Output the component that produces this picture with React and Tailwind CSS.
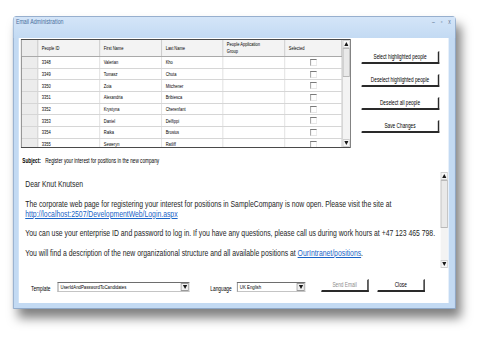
import React from "react"

const people = [
  ["3348", "Valerian", "Kho"],
  ["3349", "Tomasz", "Chuta"],
  ["3350", "Zoia", "Mitchener"],
  ["3351", "Alexandria", "Bribiesca"],
  ["3352", "Krystyna", "Cherenfant"],
  ["3353", "Daniel", "Delfippi"],
  ["3354", "Raika", "Brosius"],
  ["3355", "Seweryn", "Ratliff"],
]

function Tri({ down }) {
  return (
    <svg width="6" height="4" viewBox="0 0 6 4">
      <path d={down ? "M0 0h6L3 4z" : "M0 4h6L3 0z"} fill="#1a1a1a" />
    </svg>
  )
}

function ScrollBar({ thumbTop, thumbHeight }) {
  return (
    <div className="flex h-full w-full flex-col bg-[#f3f3f3]">
      <div className="flex h-[8px] shrink-0 items-center justify-center border border-[#cfcfcf] bg-[#f6f6f6]">
        <Tri />
      </div>
      <div className="flex-1">
        <div style={{ marginTop: thumbTop, height: thumbHeight }} className="border border-[#b9b9b9] bg-[#e9e9e9]" />
      </div>
      <div className="flex h-[8px] shrink-0 items-center justify-center border border-[#cfcfcf] bg-[#f6f6f6]">
        <Tri down />
      </div>
    </div>
  )
}

function Btn({ children, className, disabled }) {
  return (
    <div className={`flex items-center justify-center border-t border-l border-t-white border-l-white border-r-2 border-b-2 border-r-[#2a2a2a] border-b-[#2a2a2a] bg-white text-[6.6px] ${disabled ? "text-[#8c8c8c]" : "text-black"} ${className}`}>
      {children}
    </div>
  )
}

function Select({ value, className }) {
  return (
    <div className={`flex h-[10px] border border-t-[#6e6e6e] border-l-[#6e6e6e] border-r-[#c4c4c4] border-b-[#c4c4c4] bg-white ${className}`}>
      <span className="flex-1 pl-[3px] text-[6px] leading-[8px]">{value}</span>
      <div className="flex w-[11px] items-center justify-center border border-[#9a9a9a] bg-[#f0f0f0]">
        <Tri down />
      </div>
    </div>
  )
}

function App() {
  return (
    <div className="h-[341px] w-[481px] overflow-hidden bg-white font-['Liberation_Sans',Arial,sans-serif] text-black">
      <div className="ml-[13px] mt-[16px] w-[615px] origin-top-left scale-x-[0.72]">
        <div className="rounded-t-[4px] border border-[#8aa5c7] bg-[#c3daf3] shadow-[7px_9px_12px_rgba(0,0,0,0.5)]">
          <div className="flex h-[21px] items-start justify-between pl-[3px] pr-[6px] bg-gradient-to-b from-[#d4e5f8] to-[#c3daf3]">
            <span className="text-[7.3px] leading-[10px] text-[#4b6f9c]">Email Administration</span>
            <div className="flex gap-[8px] text-[7px] leading-[10px] text-[#5f7593]">
              <span>–</span>
              <span>▫</span>
              <span>x</span>
            </div>
          </div>

          <div className="ml-[7px] mr-[9px] mb-[5px] flex flex-col bg-white pt-[1px] pb-[11px]">
            {/* grid + buttons */}
            <div className="flex">
              <div className="ml-[3px] flex h-[109px] w-[458px] border border-[#4a4a4a] bg-white">
                <div className="w-[445px] overflow-hidden text-[5.6px]">
                  <div className="flex h-[17px] border-b border-[#a9a9a9] bg-[#f3f3f3]">
                    <div className="w-[23px] border-r border-[#bdbdbd] bg-[#ececec]" />
                    {["People ID", "First Name", "Last Name"].map((h, i) => (
                      <div key={h} className={`flex items-center border-r border-[#bdbdbd] pl-[5px] ${i === 2 ? "w-[85px]" : "w-[86px]"}`}>{h}</div>
                    ))}
                    <div className="flex w-[86px] items-center border-r border-[#bdbdbd] pl-[5px] leading-[7px]">People Application<br />Group</div>
                    <div className="flex w-[79px] items-center border-r border-[#bdbdbd] pl-[5px]">Selected</div>
                  </div>
                  {people.map(([id, first, last]) => (
                    <div key={id} className="flex h-[11.7px] border-b border-[#d6d6d6]">
                      <div className="w-[23px] border-r border-[#c9c9c9] bg-[#ececec]" />
                      <div className="flex w-[86px] items-center border-r border-[#d6d6d6] pl-[5px]">{id}</div>
                      <div className="flex w-[86px] items-center border-r border-[#d6d6d6] pl-[5px]">{first}</div>
                      <div className="flex w-[85px] items-center border-r border-[#d6d6d6] pl-[5px]">{last}</div>
                      <div className="w-[86px] border-r border-[#d6d6d6]" />
                      <div className="flex w-[79px] items-center justify-center border-r border-[#d6d6d6]">
                        <div className="h-[7px] w-[9px] border-t border-l border-r border-b border-t-[#7a7a7a] border-l-[#7a7a7a] border-r-[#e6e6e6] border-b-[#e6e6e6] bg-white" />
                      </div>
                    </div>
                  ))}
                </div>
                <div className="w-[11px] border-l border-[#bdbdbd]">
                  <ScrollBar thumbTop={0} thumbHeight={29} />
                </div>
              </div>

              <div className="ml-[15px] flex w-[108px] flex-col gap-[10px] pt-[12px]">
                <Btn className="h-[13px]">Select highlighted people</Btn>
                <Btn className="h-[13px]">Deselect highlighted people</Btn>
                <Btn className="h-[13px]">Deselect all people</Btn>
                <Btn className="h-[13px]">Save Changes</Btn>
              </div>
            </div>

            {/* subject */}
            <div className="mt-[8px] ml-[5px] h-[10px] text-[6.5px] leading-[10px]">
              <span className="font-bold">Subject:</span>
              <span className="ml-[6px]">Register your interest for positions in the new company</span>
            </div>

            {/* message */}
            <div className="mt-[6px] ml-[3px] mr-[1px] flex h-[96px]">
              <div className="flex-1 whitespace-nowrap pl-[6px] pt-[7px] text-[9.5px] leading-[10px] text-[#1e1e1e]">
                <p>Dear Knut Knutsen</p>
                <p className="mt-[10px]">
                  The corporate web page for registering your interest for positions in SampleCompany is now open. Please visit the site at
                  <br />
                  <span className="text-[#1a63c6] underline">http://localhost:2507/DevelopmentWeb/Login.aspx</span>
                </p>
                <p className="mt-[9px]">You can use your enterprise ID and password to log in. If you have any questions, please call us during work hours at +47 123 465 798.</p>
                <p className="mt-[10px]">
                  You will find a description of the new organizational structure and all available positions at{" "}
                  <span className="text-[#1a63c6] underline">OurIntranet/positions</span>.
                </p>
              </div>
              <div className="w-[10px]">
                <ScrollBar thumbTop={0} thumbHeight={48} />
              </div>
            </div>

            {/* bottom controls */}
            <div className="mt-[11px] flex h-[13px] items-start">
              <span className="ml-[17px] w-[37px] pt-[6px] text-[6.7px] leading-[8px]">Template</span>
              <Select value="UserIdAndPasswordToCandidates" className="mt-[3px] w-[183px]" />
              <span className="ml-[29px] w-[37px] pt-[6px] text-[6.7px] leading-[8px]">Language</span>
              <Select value="UK English" className="mt-[3px] w-[95px]" />
              <Btn disabled className="ml-[22px] h-[13px] w-[66px]">Send Email</Btn>
              <Btn className="ml-[12px] h-[13px] w-[66px]">Close</Btn>
            </div>
          </div>
        </div>
      </div>
    </div>
  )
}

export default App
